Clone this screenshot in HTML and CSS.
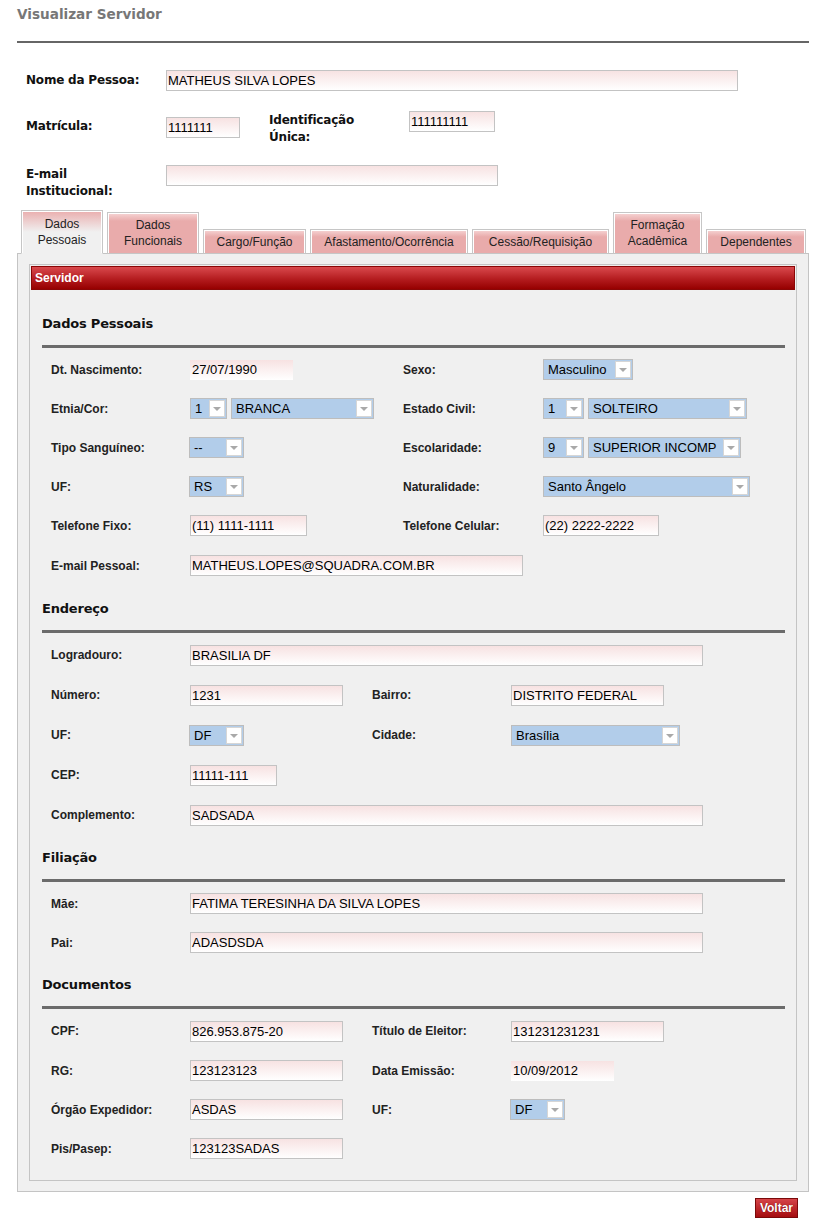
FILE: index.html
```html
<!DOCTYPE html>
<html lang="pt-BR">
<head>
<meta charset="utf-8">
<title>Visualizar Servidor</title>
<link rel="stylesheet" href="styles.css">
</head>
<body>
<div class="page">
  <h1 class="title">Visualizar Servidor</h1>
  <div class="top-rule"></div>

  <div class="head-form">
    <div class="hrow hrow-1">
      <span class="hlabel">Nome da Pessoa:</span>
      <div class="field w572">MATHEUS SILVA LOPES</div>
    </div>
    <div class="hrow hrow-2">
      <span class="hlabel mat">Matrícula:</span>
      <div class="field w74 mat-input">1111111</div>
      <span class="hlabel idu">Identificação<br>Única:</span>
      <div class="field w86">111111111</div>
    </div>
    <div class="hrow hrow-3">
      <span class="hlabel email">E-mail<br>Institucional:</span>
      <div class="field w332"></div>
    </div>
  </div>

  <div class="tabs">
    <div class="tab active tall t1">Dados<br>Pessoais</div>
    <div class="tab mid t2">Dados<br>Funcionais</div>
    <div class="tab t3">Cargo/Função</div>
    <div class="tab t4">Afastamento/Ocorrência</div>
    <div class="tab t5">Cessão/Requisição</div>
    <div class="tab mid t6">Formação<br>Acadêmica</div>
    <div class="tab t7">Dependentes</div>
  </div>

  <div class="panel">
    <div class="box">
      <div class="bar">Servidor</div>
      <div class="content">

        <section class="sec sec-a">
          <h2 class="sec-title">Dados Pessoais</h2>
          <div class="sec-rule"></div>
          <div class="row">
            <div class="cell-l"><span class="lbl">Dt. Nascimento:</span><div class="field plain w103">27/07/1990</div></div>
            <div class="cell-r"><span class="lbl">Sexo:</span><div class="select w90"><span class="val">Masculino</span><span class="arrow"></span></div></div>
          </div>
          <div class="row">
            <div class="cell-l"><span class="lbl">Etnia/Cor:</span><div class="select w37"><span class="val">1</span><span class="arrow"></span></div><div class="select w143 ml4"><span class="val">BRANCA</span><span class="arrow"></span></div></div>
            <div class="cell-r"><span class="lbl">Estado Civil:</span><div class="select w41"><span class="val">1</span><span class="arrow"></span></div><div class="select w159 ml4"><span class="val">SOLTEIRO</span><span class="arrow"></span></div></div>
          </div>
          <div class="row">
            <div class="cell-l"><span class="lbl">Tipo Sanguíneo:</span><div class="select w55 nudge"><span class="val">--</span><span class="arrow"></span></div></div>
            <div class="cell-r"><span class="lbl">Escolaridade:</span><div class="select w41"><span class="val">9</span><span class="arrow"></span></div><div class="select w153 ml4"><span class="val">SUPERIOR INCOMP</span><span class="arrow"></span></div></div>
          </div>
          <div class="row">
            <div class="cell-l"><span class="lbl">UF:</span><div class="select w55 nudge"><span class="val">RS</span><span class="arrow"></span></div></div>
            <div class="cell-r"><span class="lbl">Naturalidade:</span><div class="select w207"><span class="val">Santo Ângelo</span><span class="arrow"></span></div></div>
          </div>
          <div class="row">
            <div class="cell-l"><span class="lbl">Telefone Fixo:</span><div class="field w117">(11) 1111-1111</div></div>
            <div class="cell-r"><span class="lbl">Telefone Celular:</span><div class="field w116">(22) 2222-2222</div></div>
          </div>
          <div class="row row-41">
            <div class="cell-l"><span class="lbl">E-mail Pessoal:</span><div class="field w333">MATHEUS.LOPES@SQUADRA.COM.BR</div></div>
          </div>
        </section>

        <section class="sec sec-b">
          <h2 class="sec-title">Endereço</h2>
          <div class="sec-rule"></div>
          <div class="row row-40">
            <div class="cell-l"><span class="lbl">Logradouro:</span><div class="field w513">BRASILIA DF</div></div>
          </div>
          <div class="row row-40">
            <div class="cell-l"><span class="lbl">Número:</span><div class="field w153">1231</div></div>
            <div class="cell-r"><span class="lbl">Bairro:</span><div class="field w153">DISTRITO FEDERAL</div></div>
          </div>
          <div class="row row-40">
            <div class="cell-l"><span class="lbl">UF:</span><div class="select w55 nudge"><span class="val">DF</span><span class="arrow"></span></div></div>
            <div class="cell-r"><span class="lbl">Cidade:</span><div class="select w169"><span class="val">Brasília</span><span class="arrow"></span></div></div>
          </div>
          <div class="row row-40">
            <div class="cell-l"><span class="lbl">CEP:</span><div class="field w87">11111-111</div></div>
          </div>
          <div class="row row-40">
            <div class="cell-l"><span class="lbl">Complemento:</span><div class="field w513">SADSADA</div></div>
          </div>
        </section>

        <section class="sec sec-b">
          <h2 class="sec-title">Filiação</h2>
          <div class="sec-rule"></div>
          <div class="row">
            <div class="cell-l"><span class="lbl">Mãe:</span><div class="field w513">FATIMA TERESINHA DA SILVA LOPES</div></div>
          </div>
          <div class="row">
            <div class="cell-l"><span class="lbl">Pai:</span><div class="field w513">ADASDSDA</div></div>
          </div>
        </section>

        <section class="sec sec-b">
          <h2 class="sec-title">Documentos</h2>
          <div class="sec-rule"></div>
          <div class="row row-40">
            <div class="cell-l"><span class="lbl">CPF:</span><div class="field w153">826.953.875-20</div></div>
            <div class="cell-r"><span class="lbl">Título de Eleitor:</span><div class="field w153">131231231231</div></div>
          </div>
          <div class="row">
            <div class="cell-l"><span class="lbl">RG:</span><div class="field w153">123123123</div></div>
            <div class="cell-r"><span class="lbl">Data Emissão:</span><div class="field plain w103">10/09/2012</div></div>
          </div>
          <div class="row">
            <div class="cell-l"><span class="lbl">Órgão Expedidor:</span><div class="field w153">ASDAS</div></div>
            <div class="cell-r"><span class="lbl">UF:</span><div class="select w55 nudge"><span class="val">DF</span><span class="arrow"></span></div></div>
          </div>
          <div class="row">
            <div class="cell-l"><span class="lbl">Pis/Pasep:</span><div class="field w153">123123SADAS</div></div>
          </div>
        </section>

      </div>
    </div>
  </div>

  <div class="actions">
    <button class="btn" type="button">Voltar</button>
  </div>
</div>
</body>
</html>
```

FILE: styles.css
```css
* { box-sizing: border-box; }

body {
  margin: 0;
  background: #fff;
  color: #000;
  font-family: "Liberation Sans", Arial, sans-serif;
}

.page {
  width: 809px;
  padding-left: 17px;
}

.title {
  margin: 0;
  padding-top: 6px;
  font: bold 13.6px/16px "DejaVu Sans", Verdana, sans-serif;
  color: #777;
}

.top-rule {
  height: 2px;
  background: #666;
  margin-top: 19px;
}

/* header form */
.head-form {
  padding-left: 9px;
}

.hrow {
  display: flex;
}

.hrow-1 {
  margin-top: 27px;
  align-items: center;
  height: 21px;
}

.hrow-2 {
  margin-top: 20px;
  align-items: flex-start;
}

.hrow-3 {
  margin-top: 19px;
  align-items: flex-start;
}

.hlabel {
  width: 140px;
  flex: none;
  font: bold 12px/17px "DejaVu Sans", Verdana, sans-serif;
  letter-spacing: -0.2px;
  color: #111;
}

.hlabel.mat { margin-top: 7px; }
.mat-input { margin-top: 6px; }
.hlabel.idu { margin-left: 29px; margin-top: 1px; }
.hlabel.email { margin-top: 1px; }

/* fields */
.field {
  flex: none;
  height: 21px;
  border: 1px solid #c3c3c3;
  background: linear-gradient(#f7e2e2, #ffffff);
  font-size: 13px;
  line-height: 19px;
  padding-left: 1px;
  white-space: nowrap;
  overflow: hidden;
}

.field.plain {
  border: none;
  height: 20px;
  line-height: 20px;
  padding-left: 2px;
}

.w37 { width: 37px; }
.w41 { width: 41px; }
.w55 { width: 55px; }
.w74 { width: 74px; }
.w86 { width: 86px; }
.w87 { width: 87px; }
.w90 { width: 90px; }
.w103 { width: 103px; }
.w116 { width: 116px; }
.w117 { width: 117px; }
.w143 { width: 143px; }
.w153 { width: 153px; }
.w159 { width: 159px; }
.w169 { width: 169px; }
.w207 { width: 207px; }
.w332 { width: 332px; }
.w333 { width: 333px; }
.w513 { width: 513px; }
.w572 { width: 572px; }
.ml4 { margin-left: 4px; }
.nudge { margin-left: -1px; }

/* selects */
.select {
  flex: none;
  display: flex;
  align-items: stretch;
  height: 21px;
  border: 1px solid #bdbdbd;
  background: #b2cdea;
  font-size: 13px;
  line-height: 19px;
}

.select .val {
  flex: 1;
  padding-left: 4px;
  white-space: nowrap;
  overflow: hidden;
}

.select .arrow {
  flex: none;
  position: relative;
  width: 16px;
  margin: 1px 1px 1px 0;
  background: #fff;
  border: 1px solid #d6d6d6;
}

.select .arrow::after {
  content: "";
  position: absolute;
  left: 3px;
  top: 6px;
  border-left: 4px solid transparent;
  border-right: 4px solid transparent;
  border-top: 4px solid #a9a9a9;
}

/* tabs */
.tabs {
  display: flex;
  align-items: flex-end;
  gap: 4px;
  margin-top: 10px;
  padding-left: 4px;
  margin-bottom: -1px;
  position: relative;
  z-index: 1;
}

.tab {
  height: 25px;
  padding: 0 10px;
  border: 1px solid #c6c6c6;
  box-shadow: inset 1px 1px 0 #fff, inset -1px 0 0 #fff;
  background: linear-gradient(#f6d5d5, #e9abab 30%, #e9abab);
  font-size: 12px;
  line-height: 16px;
  padding-top: 4px;
  text-align: center;
  color: #222;
  white-space: nowrap;
}

.tab.mid {
  height: 42px;
  padding-top: 4px;
  background: linear-gradient(#f6d5d5, #e9abab 20%, #e9abab);
}

.tab.tall {
  height: 44px;
  padding-top: 5px;
}

.tab.active {
  background: linear-gradient(#eaaeae, #f0f0f0 50%);
  border-bottom-color: #f0f0f0;
}

.t1 { width: 82px; }
.t2 { width: 92px; }
.t3 { width: 103px; }
.t4 { width: 158px; }
.t5 { width: 137px; }
.t6 { width: 89px; }
.t7 { width: 100px; }

/* panel */
.panel {
  width: 792px;
  border: 1px solid #c4c4c4;
  background: #f0f0f0;
  padding: 10px 11px;
}

.box {
  border: 1px solid #c4c4c4;
  padding: 1px;
}

.bar {
  height: 24px;
  border: 1px solid #8a0606;
  background: linear-gradient(#d9494d, #b41c1f 55%, #960000);
  color: #fff;
  font: bold 12px/22px "Liberation Sans", Arial, sans-serif;
  padding-left: 3px;
}

.content {
  padding: 24px 10px 11px 11px;
}

.sec-title {
  margin: 0;
  padding-top: 1px;
  font: bold 13px/18px "DejaVu Sans", Tahoma, sans-serif;
  letter-spacing: -0.2px;
  color: #111;
}

.sec-rule {
  height: 3px;
  background: #6b6b6b;
  margin-top: 12px;
  margin-bottom: 2px;
}

.sec + .sec {
  margin-top: 13px;
}

.row {
  display: flex;
  align-items: center;
  height: 39px;
  padding-left: 9px;
}

.row-40 { height: 40px; }
.row-41 { height: 41px; }

.cell-l,
.cell-r {
  display: flex;
  align-items: center;
  flex: none;
}

.sec-a .cell-l { width: 352px; }
.sec-b .cell-l { width: 321px; }

.lbl {
  flex: none;
  width: 139px;
  font-size: 12px;
  font-weight: bold;
  color: #222;
}

.sec-a .cell-r .lbl { width: 140px; }

/* actions */
.actions {
  display: flex;
  justify-content: flex-end;
  width: 792px;
  padding-right: 11px;
  margin-top: 6px;
}

.btn {
  height: 20px;
  padding: 0 4px;
  border: 1px solid #7a0a0a;
  background: linear-gradient(#d54448, #a50d10);
  color: #fff;
  font: bold 12px/18px "Liberation Sans", Arial, sans-serif;
  text-shadow: 0 0 1px #600;
  cursor: pointer;
}
```
